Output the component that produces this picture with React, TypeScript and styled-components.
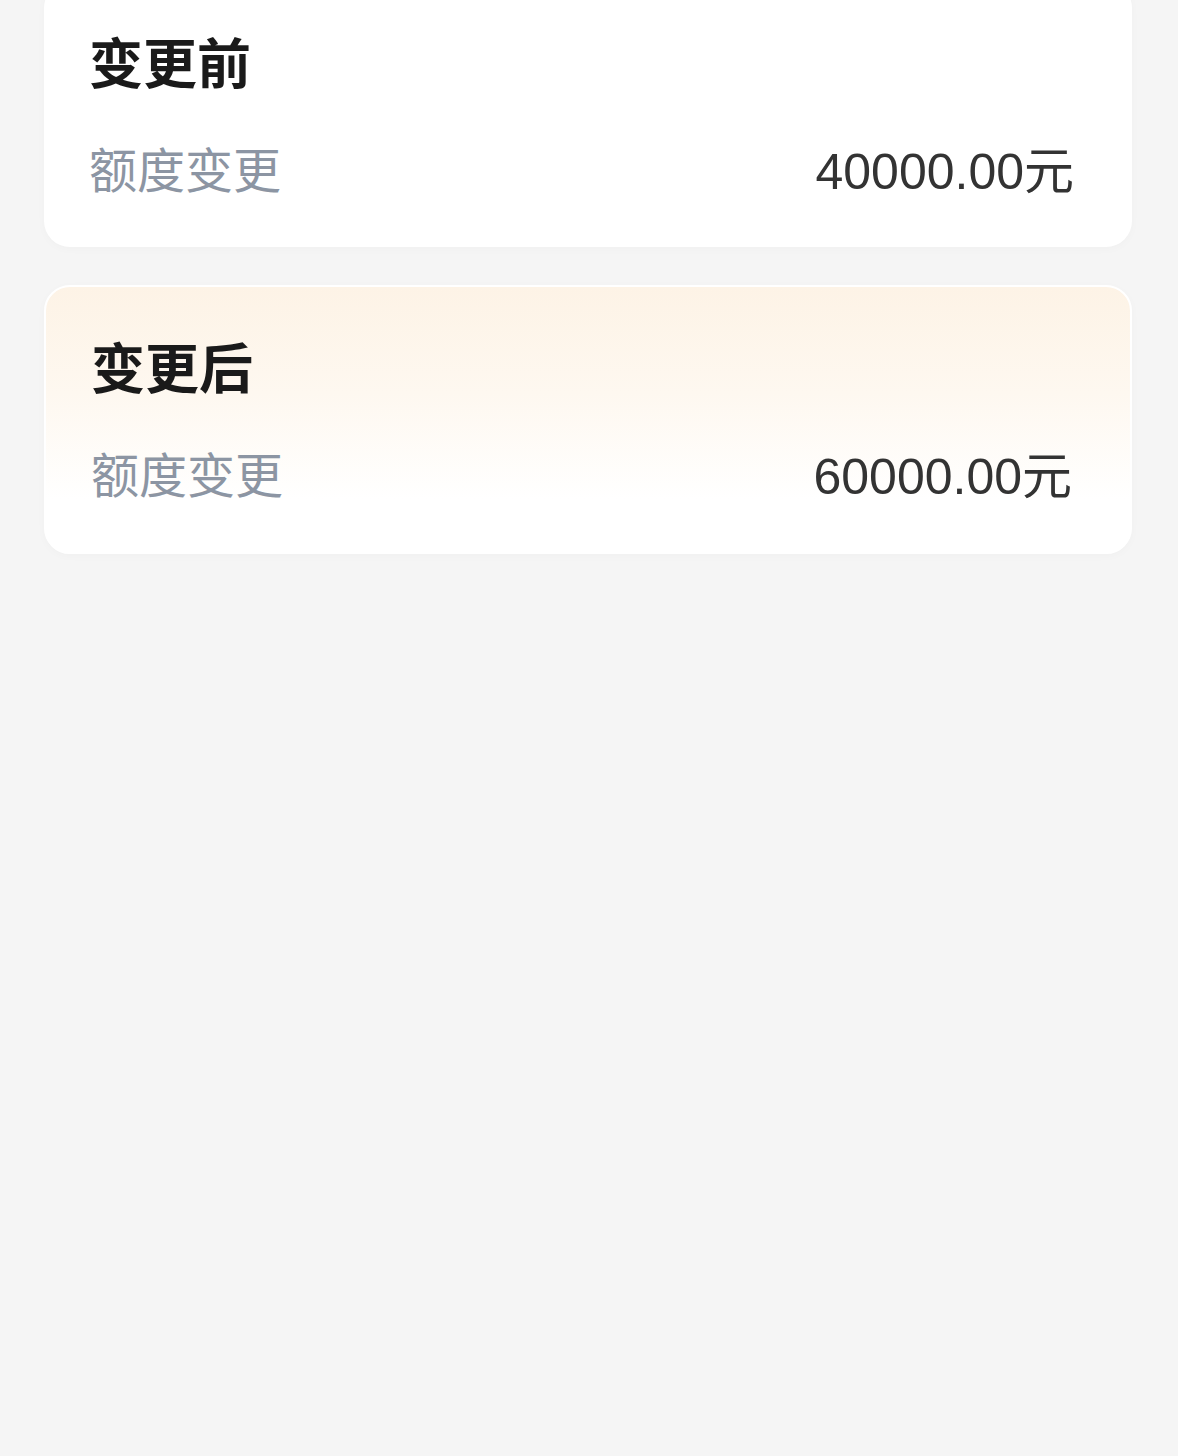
import * as React from 'react';
import styled, { createGlobalStyle } from 'styled-components';

const GlobalStyle = createGlobalStyle`
    html, body {
        margin: 0;
        padding: 0;
        background-color: #f5f5f5;
    }
    body {
        font-family: "Noto Sans CJK SC", "Noto Sans", sans-serif;
    }
`;

const Page = styled.div`
    min-height: 1456px;
    box-sizing: border-box;
    padding: 0 46px 0 44px;
    display: flex;
    flex-direction: column;
    gap: 38px;
    background-color: #f5f5f5;
    overflow: hidden;
`;

const Card = styled.section<{ $highlight?: boolean }>`
    box-sizing: border-box;
    border-radius: 26px;
    padding: 42px 58px 47px 45px;
    background: ${p => p.$highlight
        ? 'linear-gradient(180deg, #fdf3e6 0%, #fef8f0 40%, #ffffff 80%)'
        : '#ffffff'};
    border: ${p => p.$highlight ? '2px solid #ffffff' : '0'};
    box-shadow: 0 2px 10px rgba(0, 0, 0, 0.025);

    &:first-child {
        margin-top: -18px;
    }
`;

const Title = styled.h3`
    margin: 0 0 36px;
    font-size: 54px;
    line-height: 73px;
    font-weight: 700;
    color: #1a1a1a;
`;

const Row = styled.div`
    display: flex;
    align-items: center;
    justify-content: space-between;
    height: 67px;
`;

const Label = styled.span`
    font-size: 48px;
    color: #8c95a3;
`;

const Value = styled.span`
    font-family: "Liberation Sans", "Noto Sans CJK SC", sans-serif;
    font-size: 50px;
    color: #333333;
`;

const cards = [
    { title: '变更前', amount: '40000.00', highlight: false },
    { title: '变更后', amount: '60000.00', highlight: true },
];

const App = () => {
    return (
        <React.Fragment>
            <GlobalStyle />
            <Page>
                {cards.map(card => (
                    <Card key={card.title} $highlight={card.highlight}>
                        <Title>{card.title}</Title>
                        <Row>
                            <Label>额度变更</Label>
                            <Value>{card.amount}元</Value>
                        </Row>
                    </Card>
                ))}
            </Page>
        </React.Fragment>
    );
}

export default App;
